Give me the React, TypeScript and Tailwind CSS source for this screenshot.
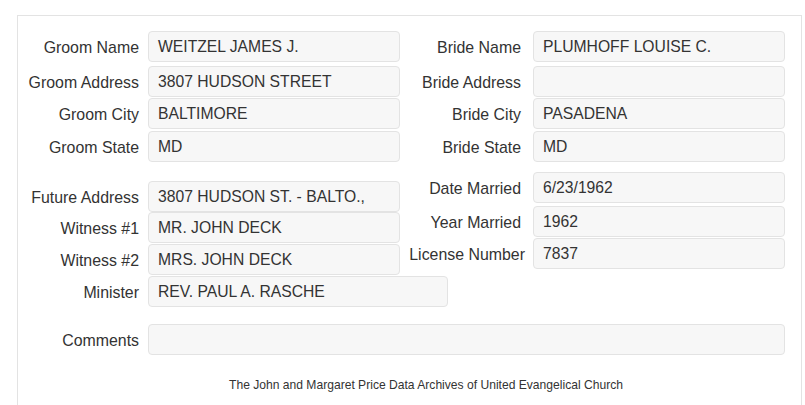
const font = { fontFamily: '"Liberation Sans", Arial, sans-serif' };

function Field({
  label,
  value,
  labelW,
  gap,
  boxW,
  className = "",
}: {
  label: string;
  value: string;
  labelW: string;
  gap: string;
  boxW: string;
  className?: string;
}) {
  return (
    <div className={`flex items-center ${className}`}>
      <div className={`${labelW} ${gap} shrink-0 whitespace-nowrap pt-[3px] text-right text-[15.9px] text-[#333]`}>
        {label}
      </div>
      <div
        className={`${boxW} flex h-[31px] shrink-0 items-center rounded-[4px] border border-[#e3e3e3] bg-[#f7f7f7] pl-[9px] text-[15.7px] text-[#333]`}
      >
        {value}
      </div>
    </div>
  );
}

export default function App() {
  return (
    <div className="min-h-[405px] bg-white pt-[15px] pl-[17px]" style={font}>
      <div className="w-[785px] h-[400px] border border-[#e3e3e3] bg-white pt-[15px]">
        {/* top block */}
        <div className="flex">
          <div className="flex flex-col">
            <Field label="Groom Name" value="WEITZEL JAMES J." labelW="w-[121px]" gap="mr-[9px]" boxW="w-[252px]" />
            <Field label="Groom Address" value="3807 HUDSON STREET" labelW="w-[121px]" gap="mr-[9px]" boxW="w-[252px]" className="mt-[4px]" />
            <Field label="Groom City" value="BALTIMORE" labelW="w-[121px]" gap="mr-[9px]" boxW="w-[252px]" className="mt-[1px]" />
            <Field label="Groom State" value="MD" labelW="w-[121px]" gap="mr-[9px]" boxW="w-[252px]" className="mt-[2px]" />
          </div>
          <div className="flex flex-col">
            <Field label="Bride Name" value="PLUMHOFF LOUISE C." labelW="w-[121px]" gap="mr-[12px]" boxW="w-[252px]" />
            <Field label="Bride Address" value="" labelW="w-[121px]" gap="mr-[12px]" boxW="w-[252px]" className="mt-[4px]" />
            <Field label="Bride City" value="PASADENA" labelW="w-[121px]" gap="mr-[12px]" boxW="w-[252px]" className="mt-[1px]" />
            <Field label="Bride State" value="MD" labelW="w-[121px]" gap="mr-[12px]" boxW="w-[252px]" className="mt-[2px]" />
          </div>
        </div>

        {/* second block */}
        <div className="flex items-start">
          <div className="flex flex-col pt-[19px]">
            <Field label="Future Address" value="3807 HUDSON ST. - BALTO.," labelW="w-[121px]" gap="mr-[9px]" boxW="w-[252px]" />
            <Field label="Witness #1" value="MR. JOHN DECK" labelW="w-[121px]" gap="mr-[9px]" boxW="w-[252px]" />
            <Field label="Witness #2" value="MRS. JOHN DECK" labelW="w-[121px]" gap="mr-[9px]" boxW="w-[252px]" className="mt-[1px]" />
            <Field label="Minister" value="REV. PAUL A. RASCHE" labelW="w-[121px]" gap="mr-[9px]" boxW="w-[300px]" className="mt-[1px]" />
          </div>
          <div className="-ml-[48px] flex flex-col pt-[10px]">
            <Field label="Date Married" value="6/23/1962" labelW="w-[121px]" gap="mr-[12px]" boxW="w-[252px]" />
            <Field label="Year Married" value="1962" labelW="w-[121px]" gap="mr-[12px]" boxW="w-[252px]" className="mt-[3px]" />
            <Field label="License Number" value="7837" labelW="w-[125px]" gap="mr-[8px]" boxW="w-[252px]" className="mt-[1px]" />
          </div>
        </div>

        {/* comments */}
        <Field label="Comments" value="" labelW="w-[121px]" gap="mr-[9px]" boxW="w-[637px]" className="mt-[17px]" />

        <p className="mt-[21px] pl-[33px] text-center text-[12.1px] text-[#333]">
          The John and Margaret Price Data Archives of United Evangelical Church
        </p>
      </div>
    </div>
  );
}
